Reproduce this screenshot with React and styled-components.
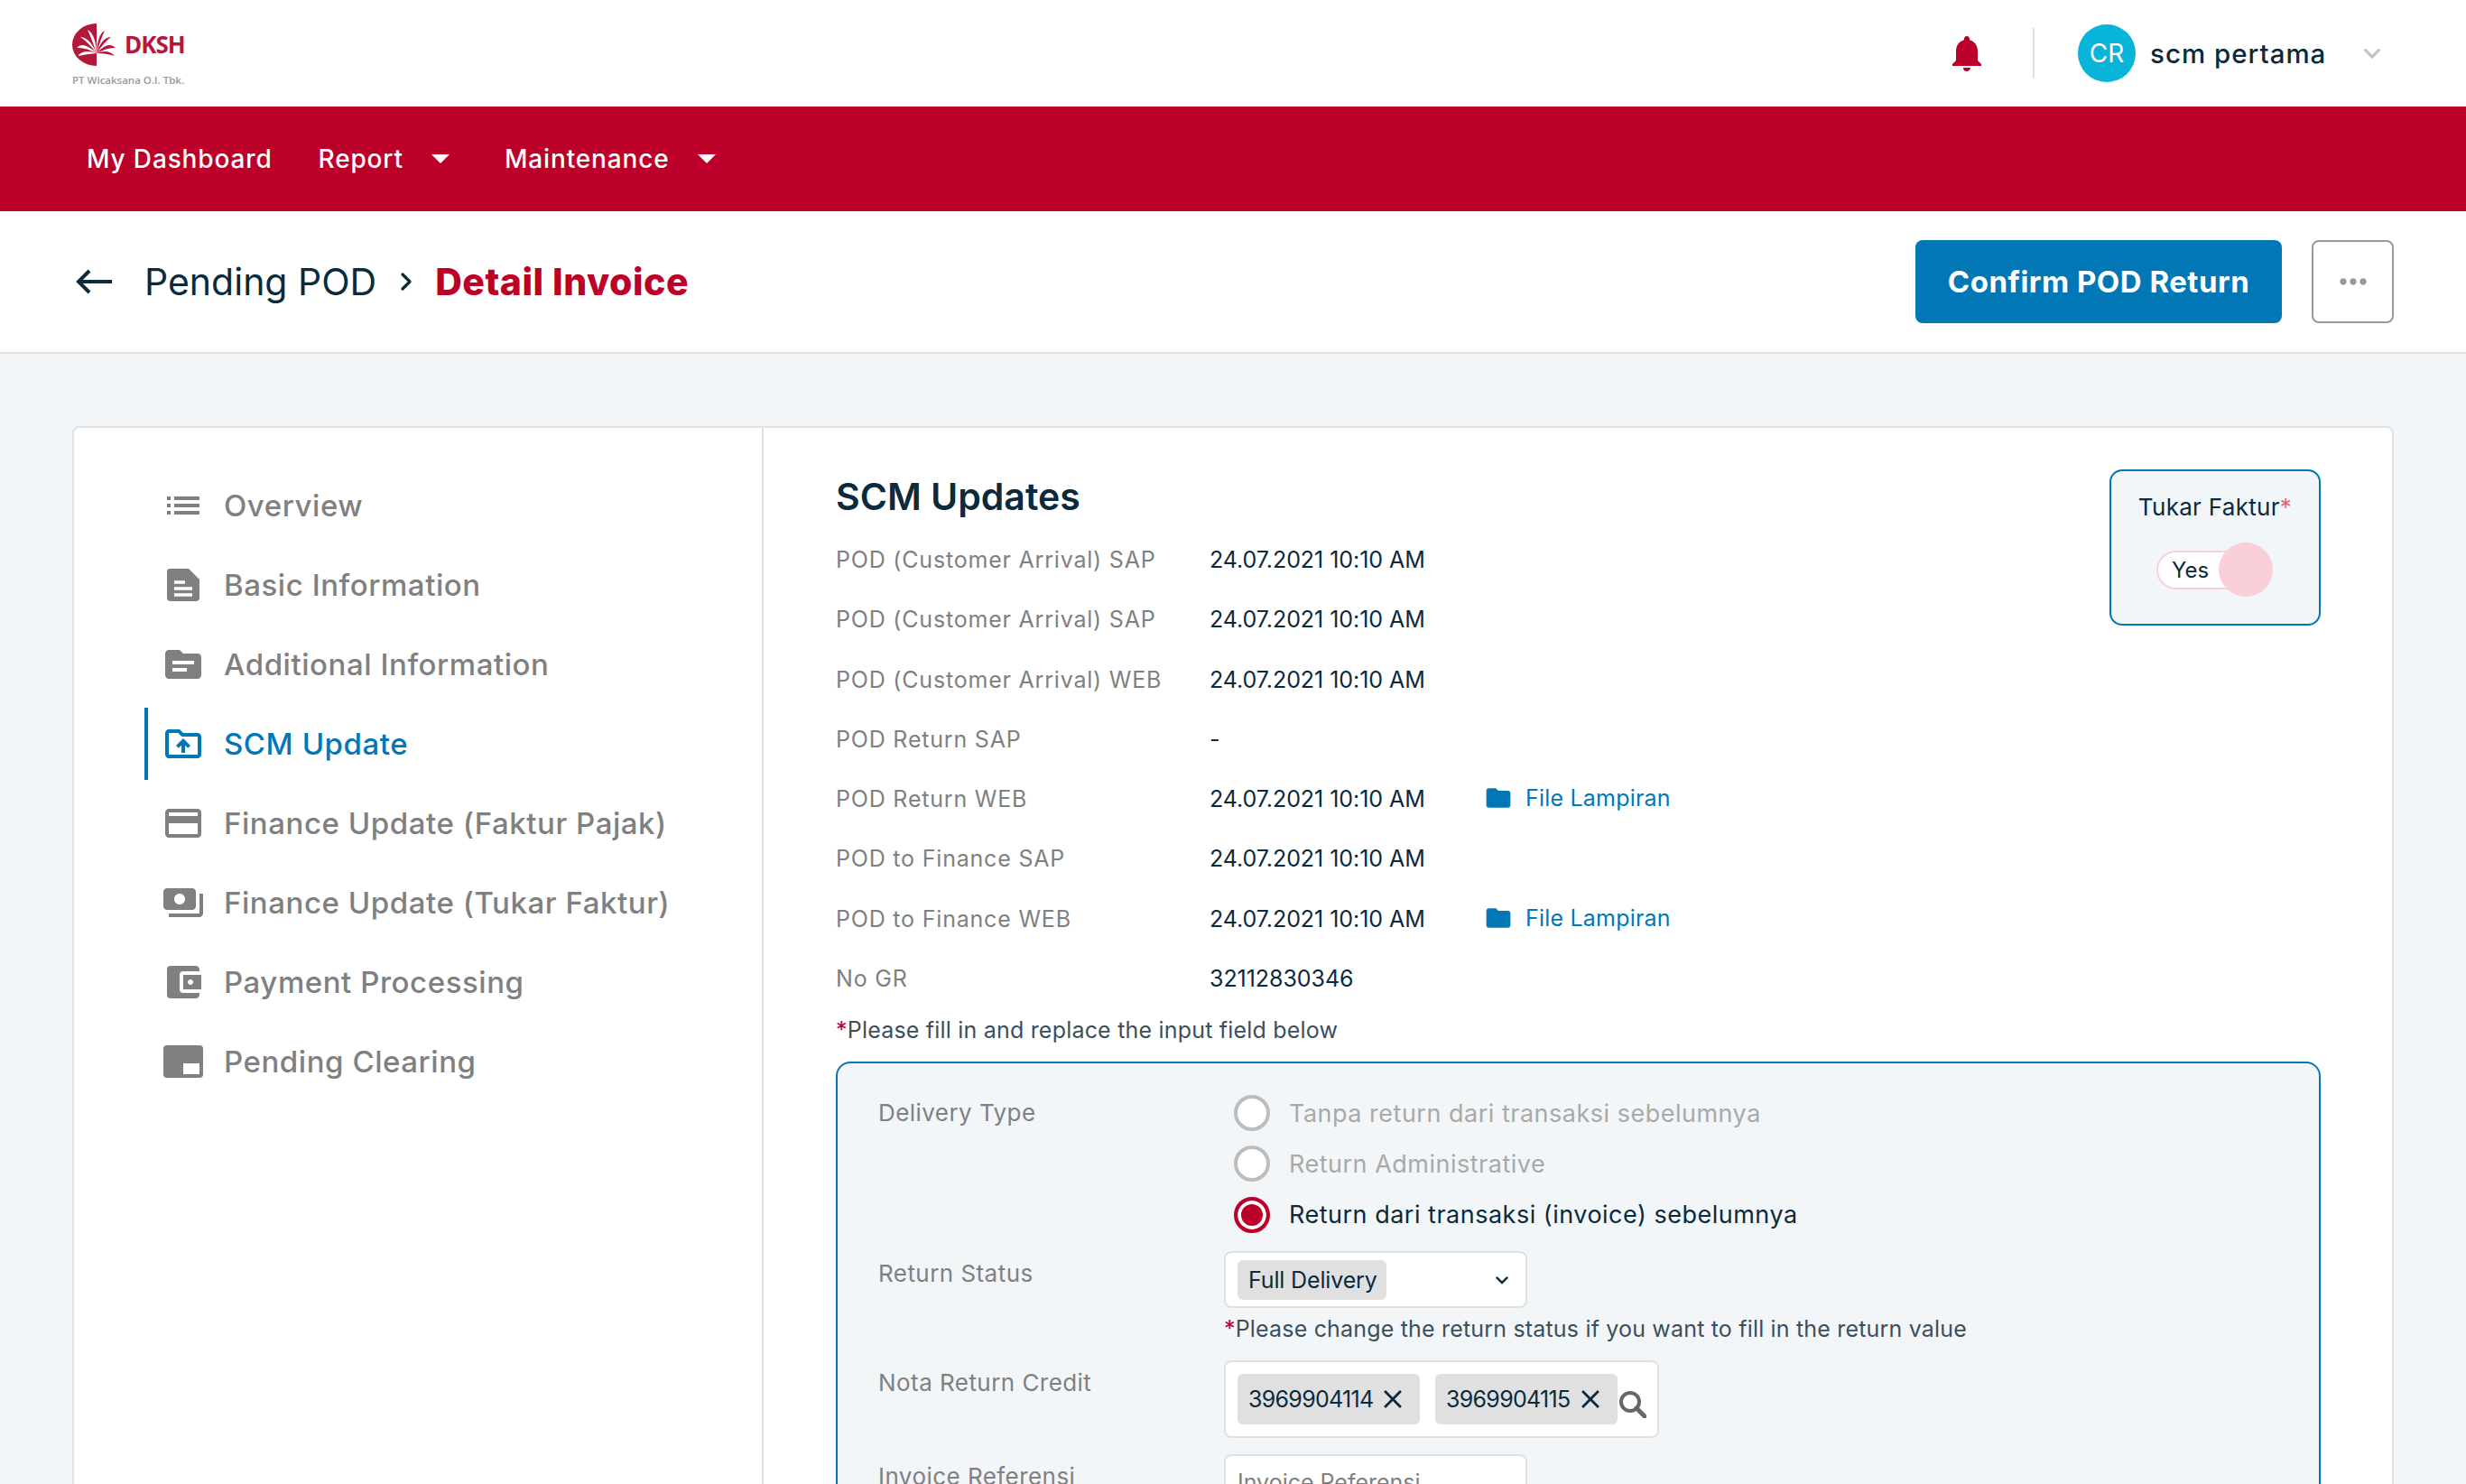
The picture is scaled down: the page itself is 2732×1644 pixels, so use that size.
import React from "react";
import styled, { createGlobalStyle } from "styled-components";
import {
  MdList,
  MdTopic,
  MdOutlineDriveFolderUpload,
  MdOutlineCreditCard,
  MdPayments,
  MdAccountBalanceWallet,
  MdNotifications,
  MdFolder,
  MdClose,
  MdKeyboardArrowDown,
  MdMoreHoriz,
} from "react-icons/md";
import { ChevronRight } from "lucide-react";

const RED = "#bc0029";
const BLUE = "#0277b6";
const INK = "#0b2a3c";
const GREY = "#808080";
const FONT = `Inter, "Liberation Sans", sans-serif`;

const GlobalStyle = createGlobalStyle`
  html, body {
    margin: 0;
    height: 1644px;
    overflow: hidden;
    background: #f2f6f9;
    font-family: ${FONT};
    color: ${INK};
  }
`;

const FeaturedIcon = () => (
  <svg width="44" height="36" viewBox="0 0 44 36">
    <rect width="44" height="36" rx="4" fill="currentColor" />
    <rect x="22" y="20" width="18" height="12" fill="#fff" />
  </svg>
);

const DocIcon = () => (
  <svg width="36" height="36" viewBox="0 0 36 36">
    <path
      d="M3 0H24L36 12V32a4 4 0 0 1-4 4H4a4 4 0 0 1-4-4V3a3 3 0 0 1 3-3Z"
      fill="currentColor"
    />
    <path d="M8 15H20M8 22H28M8 29H28" stroke="#fff" strokeWidth="3.4" fill="none" />
  </svg>
);

const BackArrow = () => (
  <svg width="40" height="28" viewBox="0 0 40 28">
    <path d="M40 14H3M15 2L3 14L15 26" fill="none" stroke={INK} strokeWidth="4" />
  </svg>
);

const SearchIcon = () => (
  <svg width="30" height="30" viewBox="0 0 30 30">
    <circle cx="12" cy="12" r="10" fill="none" stroke="#666" strokeWidth="4" />
    <path d="M19 19L28 28" stroke="#666" strokeWidth="5" strokeLinecap="round" />
  </svg>
);

const fronds = [
  "M27 33Q14 26 5 27Q12 19 27 33Z",
  "M27 33Q16 34 6 36Q13 28 27 33Z",
  "M27 33Q17 20 9 15Q19 15 27 33Z",
  "M27 33Q22 18 17 7Q26 12 27 33Z",
];
const rightFronds = [
  "M27 33Q40 26 48 27Q40 19 27 33Z",
  "M27 33Q38 33 47 36Q40 28 27 33Z",
  "M27 33Q36 20 43 15Q33 15 27 33Z",
  "M27 33Q31 18 36 8Q28 12 27 33Z",
];

const LogoMark = () => (
  <svg width="48" height="47" viewBox="0 0 48 47">
    <path d="M27 0A27 23.5 0 0 0 27 47Z" fill="#b5173b" />
    {fronds.map((d) => (
      <path key={d} d={d} fill="#fff" />
    ))}
    {rightFronds.map((d) => (
      <path key={d} d={d} fill="#b5173b" />
    ))}
  </svg>
);

const menu = [
  { label: "Overview", icon: <MdList size={48} /> },
  { label: "Basic Information", icon: <DocIcon /> },
  { label: "Additional Information", icon: <MdTopic size={48} /> },
  { label: "SCM Update", icon: <MdOutlineDriveFolderUpload size={48} />, active: true },
  { label: "Finance Update (Faktur Pajak)", icon: <MdOutlineCreditCard size={48} /> },
  { label: "Finance Update (Tukar Faktur)", icon: <MdPayments size={48} /> },
  { label: "Payment Processing", icon: <MdAccountBalanceWallet size={48} /> },
  { label: "Pending Clearing", icon: <FeaturedIcon /> },
];

const updates = [
  { label: "POD (Customer Arrival) SAP", value: "24.07.2021 10:10 AM" },
  { label: "POD (Customer Arrival) SAP", value: "24.07.2021 10:10 AM" },
  { label: "POD (Customer Arrival) WEB", value: "24.07.2021 10:10 AM" },
  { label: "POD Return SAP", value: "-" },
  { label: "POD Return WEB", value: "24.07.2021 10:10 AM", file: true },
  { label: "POD to Finance SAP", value: "24.07.2021 10:10 AM" },
  { label: "POD to Finance WEB", value: "24.07.2021 10:10 AM", file: true },
  { label: "No GR", value: "32112830346" },
];

const radios = [
  { label: "Tanpa return dari transaksi sebelumnya" },
  { label: "Return Administrative" },
  { label: "Return dari transaksi (invoice) sebelumnya", checked: true },
];

export default function App() {
  return (
    <>
      <GlobalStyle />
      <TopBar>
        <Logo>
          <LogoRow>
            <LogoMark />
            <LogoName>DKSH</LogoName>
          </LogoRow>
          <LogoSub>PT Wicaksana O.I. Tbk.</LogoSub>
        </Logo>
        <UserArea>
          <BellIcon />
          <TopDivider />
          <Avatar>CR</Avatar>
          <UserName>scm pertama</UserName>
          <UserChevron />
        </UserArea>
      </TopBar>

      <NavBar>
        <NavItem>My Dashboard</NavItem>
        <NavItem>
          Report <NavCaret />
        </NavItem>
        <NavItem>
          Maintenance <NavCaret />
        </NavItem>
      </NavBar>

      <SubHeader>
        <Crumbs>
          <BackArrow />
          <CrumbParent>Pending POD</CrumbParent>
          <ChevronRight size={32} strokeWidth={2.4} color={INK} />
          <CrumbCurrent>Detail Invoice</CrumbCurrent>
        </Crumbs>
        <Actions>
          <PrimaryButton>Confirm POD Return</PrimaryButton>
          <MoreButton>
            <MdMoreHoriz size={44} />
          </MoreButton>
        </Actions>
      </SubHeader>

      <Content>
        <Card>
          <Sidebar>
            {menu.map(({ label, icon, active }) => (
              <SideItem key={label} $active={active}>
                <SideIcon>{icon}</SideIcon>
                {label}
              </SideItem>
            ))}
          </Sidebar>

          <Main>
            <TopSection>
              <div>
                <Title>SCM Updates</Title>
                {updates.map((row, i) => (
                  <InfoRow key={i}>
                    <InfoLabel>{row.label}</InfoLabel>
                    <InfoValue>{row.value}</InfoValue>
                    {row.file && (
                      <FileLink>
                        <MdFolder size={32} />
                        File Lampiran
                      </FileLink>
                    )}
                  </InfoRow>
                ))}
              </div>
              <TukarBox>
                <TukarLabel>
                  Tukar Faktur<TukarStar>*</TukarStar>
                </TukarLabel>
                <Toggle>
                  <ToggleText>Yes</ToggleText>
                  <ToggleKnob />
                </Toggle>
              </TukarBox>
            </TopSection>

            <FillNote>
              <Star>*</Star>Please fill in and replace the input field below
            </FillNote>

            <Panel>
              <FormRow $mb={15.5}>
                <FormLabel>Delivery Type</FormLabel>
                <RadioGroup>
                  {radios.map((r) => (
                    <RadioRow key={r.label} $checked={r.checked}>
                      <RadioDot $checked={r.checked} />
                      {r.label}
                    </RadioRow>
                  ))}
                </RadioGroup>
              </FormRow>

              <FormRow $mb={17}>
                <FormLabel>Return Status</FormLabel>
                <div>
                  <SelectBox>
                    <Chip>Full Delivery</Chip>
                    <SelectChevron />
                  </SelectBox>
                  <HelpText>
                    <Star>*</Star>Please change the return status if you want to fill in the
                    return value
                  </HelpText>
                </div>
              </FormRow>

              <FormRow $mb={18}>
                <FormLabel>Nota Return Credit</FormLabel>
                <TagBox>
                  <Tag>
                    3969904114 <MdClose size={34} />
                  </Tag>
                  <Tag>
                    3969904115 <MdClose size={34} />
                  </Tag>
                  <SearchSlot>
                    <SearchIcon />
                  </SearchSlot>
                </TagBox>
              </FormRow>

              <FormRow $mb={0}>
                <FormLabel>Invoice Referensi</FormLabel>
                <InputBox>Invoice Referensi</InputBox>
              </FormRow>
            </Panel>
          </Main>
        </Card>
      </Content>
    </>
  );
}

const TopBar = styled.header`
  height: 118px;
  background: #fff;
  display: flex;
  align-items: center;
  justify-content: space-between;
  padding: 0 85px 0 80px;
  box-sizing: border-box;
`;

const Logo = styled.div`
  display: flex;
  flex-direction: column;
  gap: 10px;
  width: 130px;
  margin-top: 2px;
`;

const LogoRow = styled.div`
  display: flex;
  align-items: center;
  gap: 10px;
`;

const LogoName = styled.span`
  font-family: "Open Sans", sans-serif;
  font-weight: 700;
  font-size: 26px;
  line-height: 30px;
  letter-spacing: -1px;
  color: #b5173b;
`;

const LogoSub = styled.span`
  font-family: "Open Sans", sans-serif;
  font-weight: 600;
  font-size: 11.5px;
  line-height: 12px;
  white-space: nowrap;
  color: #999;
`;

const UserArea = styled.div`
  display: flex;
  align-items: center;
`;

const BellIcon = styled(MdNotifications)`
  width: 48px;
  height: 48px;
  color: ${RED};
`;

const TopDivider = styled.div`
  width: 2px;
  height: 56px;
  background: #e0e0e0;
  margin: 0 48px 0 49px;
`;

const Avatar = styled.div`
  width: 64px;
  height: 64px;
  border-radius: 50%;
  background: #08b5d9;
  color: #fff;
  font-size: 28px;
  display: flex;
  align-items: center;
  justify-content: center;
`;

const UserName = styled.span`
  font-size: 29.5px;
  font-weight: 500;
  margin-left: 16px;
  letter-spacing: 1px;
  width: 227px;
  white-space: nowrap;
`;

const UserChevron = styled(MdKeyboardArrowDown)`
  width: 38px;
  height: 38px;
  color: #c4c4c4;
`;

const NavBar = styled.nav`
  height: 116px;
  background: ${RED};
  display: flex;
  align-items: center;
  gap: 51px;
  padding-left: 96px;
`;

const NavItem = styled.div`
  color: #fff;
  font-size: 28px;
  font-weight: 500;
  letter-spacing: 0.85px;
  display: flex;
  align-items: center;
  gap: 31px;
  & + & {
    margin-right: 10px;
  }
`;

const NavCaret = styled.span`
  width: 0;
  height: 0;
  border-left: 10px solid transparent;
  border-right: 10px solid transparent;
  border-top: 10px solid #fff;
`;

const SubHeader = styled.div`
  height: 158px;
  background: #fff;
  border-bottom: 2px solid #dfe1e3;
  box-sizing: border-box;
  display: flex;
  align-items: center;
  justify-content: space-between;
  padding: 0 80px 0 84px;
`;

const Crumbs = styled.div`
  display: flex;
  align-items: center;
`;

const CrumbParent = styled.span`
  font-size: 41px;
  color: ${INK};
  margin-left: 36px;
  margin-right: 17px;
`;

const CrumbCurrent = styled.span`
  font-size: 41px;
  font-weight: 800;
  letter-spacing: 0.5px;
  color: ${RED};
  margin-left: 16px;
`;

const Actions = styled.div`
  display: flex;
  gap: 33px;
`;

const PrimaryButton = styled.button`
  width: 406px;
  height: 92px;
  background: ${BLUE};
  border: 0;
  border-radius: 8px;
  color: #fff;
  font-family: ${FONT};
  font-size: 33px;
  font-weight: 700;
  letter-spacing: 0.5px;
`;

const MoreButton = styled.button`
  width: 91px;
  height: 92px;
  background: #fff;
  border: 2px solid #999;
  border-radius: 8px;
  color: #999;
  display: flex;
  align-items: center;
  justify-content: center;
  padding: 0;
`;

const Content = styled.main`
  padding: 80px 80px 0;
`;

const Card = styled.section`
  height: 1220px;
  box-sizing: border-box;
  background: #fff;
  border: 2px solid #e0e2e4;
  border-radius: 8px;
  display: flex;
  overflow: hidden;
`;

const Sidebar = styled.aside`
  width: 764px;
  flex-shrink: 0;
  box-sizing: border-box;
  border-right: 2px solid #e0e2e4;
  padding: 46px 0 0 78px;
  display: flex;
  flex-direction: column;
  gap: 8px;
`;

const SideItem = styled.div`
  height: 80px;
  display: flex;
  align-items: center;
  gap: 21px;
  padding-left: 15px;
  border-left: 4px solid ${({ $active }) => ($active ? BLUE : "transparent")};
  color: ${({ $active }) => ($active ? BLUE : GREY)};
  font-size: 33px;
  font-weight: 500;
  letter-spacing: 0.55px;
`;

const SideIcon = styled.span`
  width: 48px;
  height: 48px;
  display: flex;
  align-items: center;
  justify-content: center;
`;

const Main = styled.div`
  flex: 1;
  min-width: 0;
  padding: 46px 79px 0 80px;
  box-sizing: border-box;
`;

const TopSection = styled.div`
  display: flex;
  justify-content: space-between;
  align-items: flex-start;
`;

const Title = styled.h2`
  margin: 0;
  height: 67px;
  line-height: 60px;
  font-size: 41px;
  font-weight: 600;
  color: ${INK};
`;

const InfoRow = styled.div`
  height: 66.25px;
  display: grid;
  grid-template-columns: 414px 305px auto;
  align-items: center;
  font-size: 25px;
`;

const InfoLabel = styled.span`
  color: ${GREY};
  letter-spacing: 0.8px;
`;

const InfoValue = styled.span`
  color: ${INK};
  letter-spacing: -0.05px;
`;

const FileLink = styled.span`
  display: flex;
  align-items: center;
  gap: 14px;
  margin-left: -1px;
  margin-top: -2px;
  color: ${BLUE};
  letter-spacing: 0.2px;
`;

const TukarBox = styled.div`
  width: 234px;
  height: 173px;
  box-sizing: border-box;
  background: #f2f6f9;
  border: 2px solid ${BLUE};
  border-radius: 14px;
  display: flex;
  flex-direction: column;
  align-items: center;
  padding-top: 22px;
  gap: 30px;
`;

const TukarLabel = styled.div`
  font-size: 26px;
  line-height: 36px;
  letter-spacing: 0.3px;
`;

const Star = styled.span`
  color: ${RED};
`;

const TukarStar = styled.span`
  color: #d9657f;
`;

const Toggle = styled.div`
  position: relative;
  width: 130px;
  height: 43px;
  display: flex;
  align-items: center;
`;

const ToggleText = styled.span`
  width: 86px;
  height: 43px;
  box-sizing: border-box;
  border: 2px solid #f9d0d8;
  border-right: 0;
  border-radius: 22px 0 0 22px;
  background: #fff;
  font-size: 24px;
  line-height: 39px;
  padding-left: 15px;
`;

const ToggleKnob = styled.span`
  position: absolute;
  left: 69px;
  top: -9px;
  width: 60px;
  height: 60px;
  border-radius: 50%;
  background: #f9d0d8;
`;

const FillNote = styled.div`
  height: 48px;
  line-height: 48px;
  margin-bottom: 11px;
  font-size: 25px;
  letter-spacing: 0.2px;
  color: #3c4f5c;
`;

const Panel = styled.div`
  box-sizing: border-box;
  height: 560px;
  background: #f2f6f9;
  border: 2px solid ${BLUE};
  border-radius: 16px;
  padding: 30px 0 0 45px;
`;

const FormRow = styled.div`
  display: grid;
  grid-template-columns: 383px 1fr;
  margin-bottom: ${({ $mb }) => $mb}px;
`;

const FormLabel = styled.div`
  font-size: 26px;
  line-height: 36px;
  padding-top: 7px;
  color: ${GREY};
  letter-spacing: 0.45px;
`;

const RadioGroup = styled.div`
  display: flex;
  flex-direction: column;
  gap: 6.25px;
  padding-left: 11px;
`;

const RadioRow = styled.div`
  height: 50px;
  display: flex;
  align-items: center;
  gap: 21px;
  font-size: 27px;
  letter-spacing: 0.5px;
  color: ${({ $checked }) => ($checked ? INK : "#a9a9a9")};
`;

const RadioDot = styled.span`
  width: 40px;
  height: 40px;
  box-sizing: border-box;
  border-radius: 50%;
  border: 4px solid ${({ $checked }) => ($checked ? RED : "#bdbdbd")};
  background: ${({ $checked }) => ($checked ? RED : "#fff")};
  box-shadow: ${({ $checked }) => ($checked ? "inset 0 0 0 4px #fff" : "none")};
`;

const SelectBox = styled.div`
  width: 336px;
  height: 63px;
  box-sizing: border-box;
  background: #fff;
  border: 2px solid #e0e0e0;
  border-radius: 8px;
  display: flex;
  align-items: center;
  justify-content: space-between;
  padding: 0 12px 0 13px;
`;

const Chip = styled.span`
  width: 165px;
  height: 44px;
  box-sizing: border-box;
  background: #e0e0e0;
  border-radius: 6px;
  padding-left: 12px;
  font-size: 25px;
  line-height: 44px;
  letter-spacing: -0.15px;
  white-space: nowrap;
`;

const SelectChevron = styled(MdKeyboardArrowDown)`
  width: 28px;
  height: 28px;
  color: ${INK};
`;

const HelpText = styled.div`
  margin-top: 5px;
  font-size: 25px;
  line-height: 36px;
  color: #3c4f5c;
  letter-spacing: 0.18px;
  white-space: nowrap;
`;

const TagBox = styled.div`
  width: 482px;
  height: 86px;
  box-sizing: border-box;
  background: #fff;
  border: 2px solid #e0e0e0;
  border-radius: 8px;
  display: flex;
  align-items: center;
  padding-left: 13px;
  gap: 17px;
`;

const Tag = styled.span`
  width: 202px;
  height: 56px;
  flex-shrink: 0;
  box-sizing: border-box;
  background: #e0e0e0;
  border-radius: 6px;
  padding: 0 13px 0 12px;
  font-size: 25px;
  letter-spacing: -0.7px;
  display: flex;
  align-items: center;
  justify-content: space-between;
`;

const SearchSlot = styled.span`
  display: flex;
  margin: 12px 0 0 -15px;
`;

const InputBox = styled.div`
  width: 336px;
  height: 63px;
  box-sizing: border-box;
  background: #fff;
  border: 2px solid #e0e0e0;
  border-radius: 8px;
  padding-left: 13px;
  font-size: 25px;
  line-height: 59px;
  color: #808080;
`;
